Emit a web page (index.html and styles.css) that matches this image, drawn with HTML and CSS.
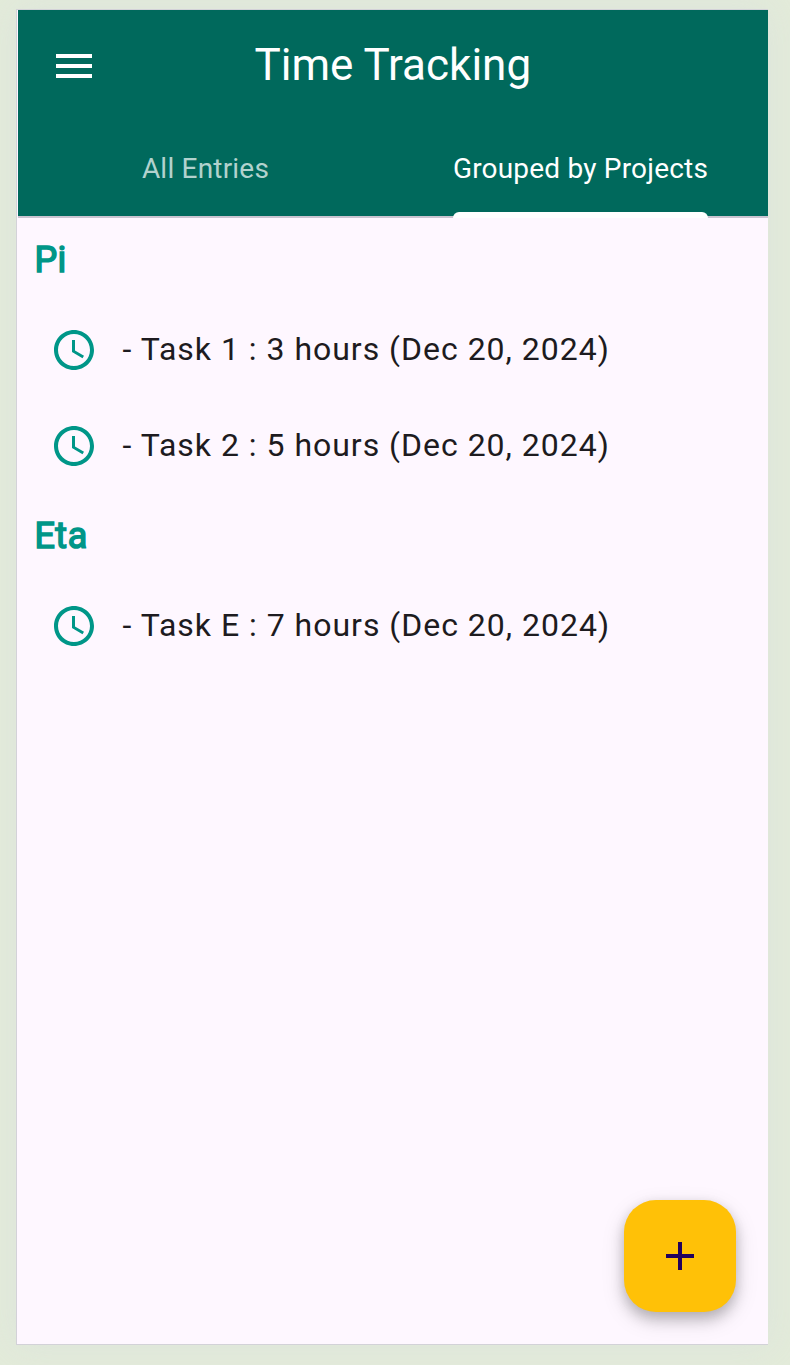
FILE: index.html
```
<!DOCTYPE html>
<html lang="en">
<head>
<meta charset="utf-8">
<title>Time Tracking</title>
<link rel="stylesheet" href="styles.css">
</head>
<body>
<main class="app">
  <header class="header">
    <div class="toolbar">
      <button class="menu" aria-label="Menu"><svg viewBox="0 0 24 24"><path d="M3 18h18v-2H3v2zm0-5h18v-2H3v2zm0-7v2h18V6H3z"/></svg></button>
      <h1 class="title">Time Tracking</h1>
    </div>
    <nav class="tabs">
      <a class="tab"><span class="tab-label">All Entries</span></a>
      <a class="tab tab-active"><span class="tab-label">Grouped by Projects</span></a>
    </nav>
  </header>
  <section class="group">
    <h2 class="project">Pi</h2>
    <div class="entry"><svg class="clock" viewBox="0 0 24 24"><path d="M11.99 2C6.47 2 2 6.48 2 12s4.47 10 9.99 10C17.52 22 22 17.52 22 12S17.52 2 11.99 2zM12 20c-4.42 0-8-3.58-8-8s3.58-8 8-8 8 3.58 8 8-3.58 8-8 8zm.5-13H11v6l5.25 3.15.75-1.23-4.5-2.67z"/></svg><span class="entry-text">- Task 1 : 3 hours (Dec 20, 2024)</span></div>
    <div class="entry"><svg class="clock" viewBox="0 0 24 24"><path d="M11.99 2C6.47 2 2 6.48 2 12s4.47 10 9.99 10C17.52 22 22 17.52 22 12S17.52 2 11.99 2zM12 20c-4.42 0-8-3.58-8-8s3.58-8 8-8 8 3.58 8 8-3.58 8-8 8zm.5-13H11v6l5.25 3.15.75-1.23-4.5-2.67z"/></svg><span class="entry-text">- Task 2 : 5 hours (Dec 20, 2024)</span></div>
  </section>
  <section class="group">
    <h2 class="project">Eta</h2>
    <div class="entry"><svg class="clock" viewBox="0 0 24 24"><path d="M11.99 2C6.47 2 2 6.48 2 12s4.47 10 9.99 10C17.52 22 22 17.52 22 12S17.52 2 11.99 2zM12 20c-4.42 0-8-3.58-8-8s3.58-8 8-8 8 3.58 8 8-3.58 8-8 8zm.5-13H11v6l5.25 3.15.75-1.23-4.5-2.67z"/></svg><span class="entry-text">- Task E : 7 hours (Dec 20, 2024)</span></div>
  </section>
  <button class="fab" aria-label="Add entry"><svg viewBox="0 0 24 24"><path d="M19 13h-6v6h-2v-6H5v-2h6V5h2v6h6v2z"/></svg></button>
</main>
</body>
</html>
```

FILE: styles.css
```
* { box-sizing: border-box; }
body {
  margin: 0;
  padding: 9px 22px 20px 16px;
  height: 1365px;
  overflow: hidden;
  background: #e3ebda;
  font-family: Roboto, "Liberation Sans", sans-serif;
}
.app {
  position: relative;
  height: 1336px;
  border: 1px solid #d3d2d8;
  border-right: 0;
  background: #fef7ff;
  box-shadow: 0 0 32px rgba(205, 212, 226, .3);
}
.header {
  height: 208px;
  margin-left: 1px;
  background: #00695c;
  border-bottom: 2px solid #cac4d0;
  color: #fff;
}
.toolbar { display: flex; align-items: center; height: 112px; padding-left: 32px; }
.menu { display: flex; padding: 0; border: 0; background: none; }
.menu svg { width: 48px; height: 48px; fill: #fff; }
.title { margin: 0 0 2px 156.5px; font-size: 44px; font-weight: 400; line-height: 56px; white-space: nowrap; }
.tabs { display: flex; height: 96px; }
.tab { flex: 1; display: flex; justify-content: center; color: #b2d2ce; font-size: 28px; letter-spacing: .2px; }
.tab-label { position: relative; height: 96px; line-height: 94px; white-space: nowrap; }
.tab-active { color: #fff; }
.tab-active .tab-label::after {
  content: "";
  position: absolute;
  left: 0;
  right: 0;
  bottom: 0;
  height: 6px;
  border-radius: 6px 6px 0 0;
  background: #fff;
}
.project {
  margin: 0;
  padding: 16px 17.4px;
  height: 84px;
  line-height: 52px;
  font-size: 36px;
  font-weight: 400;
  letter-spacing: .5px;
  color: #009688;
  -webkit-text-stroke: 1.5px #009688;
}
.entry { display: flex; align-items: center; gap: 24.5px; height: 96px; padding-left: 33px; }
.clock { width: 48px; height: 48px; fill: #009688; }
.entry-text { padding-bottom: 2px; font-size: 32px; letter-spacing: .985px; color: #1d1b20; white-space: nowrap; }
.fab {
  position: absolute;
  right: 32px;
  bottom: 32px;
  width: 112px;
  height: 112px;
  display: grid;
  place-items: center;
  padding: 0;
  border: 0;
  border-radius: 32px;
  background: #ffc107;
  box-shadow: 0 8px 14px rgba(0,0,0,.18), 0 8px 24px rgba(0,0,0,.12), 0 2px 12px rgba(0,0,0,.06);
}
.fab svg { width: 48px; height: 48px; fill: #21005d; }
```
